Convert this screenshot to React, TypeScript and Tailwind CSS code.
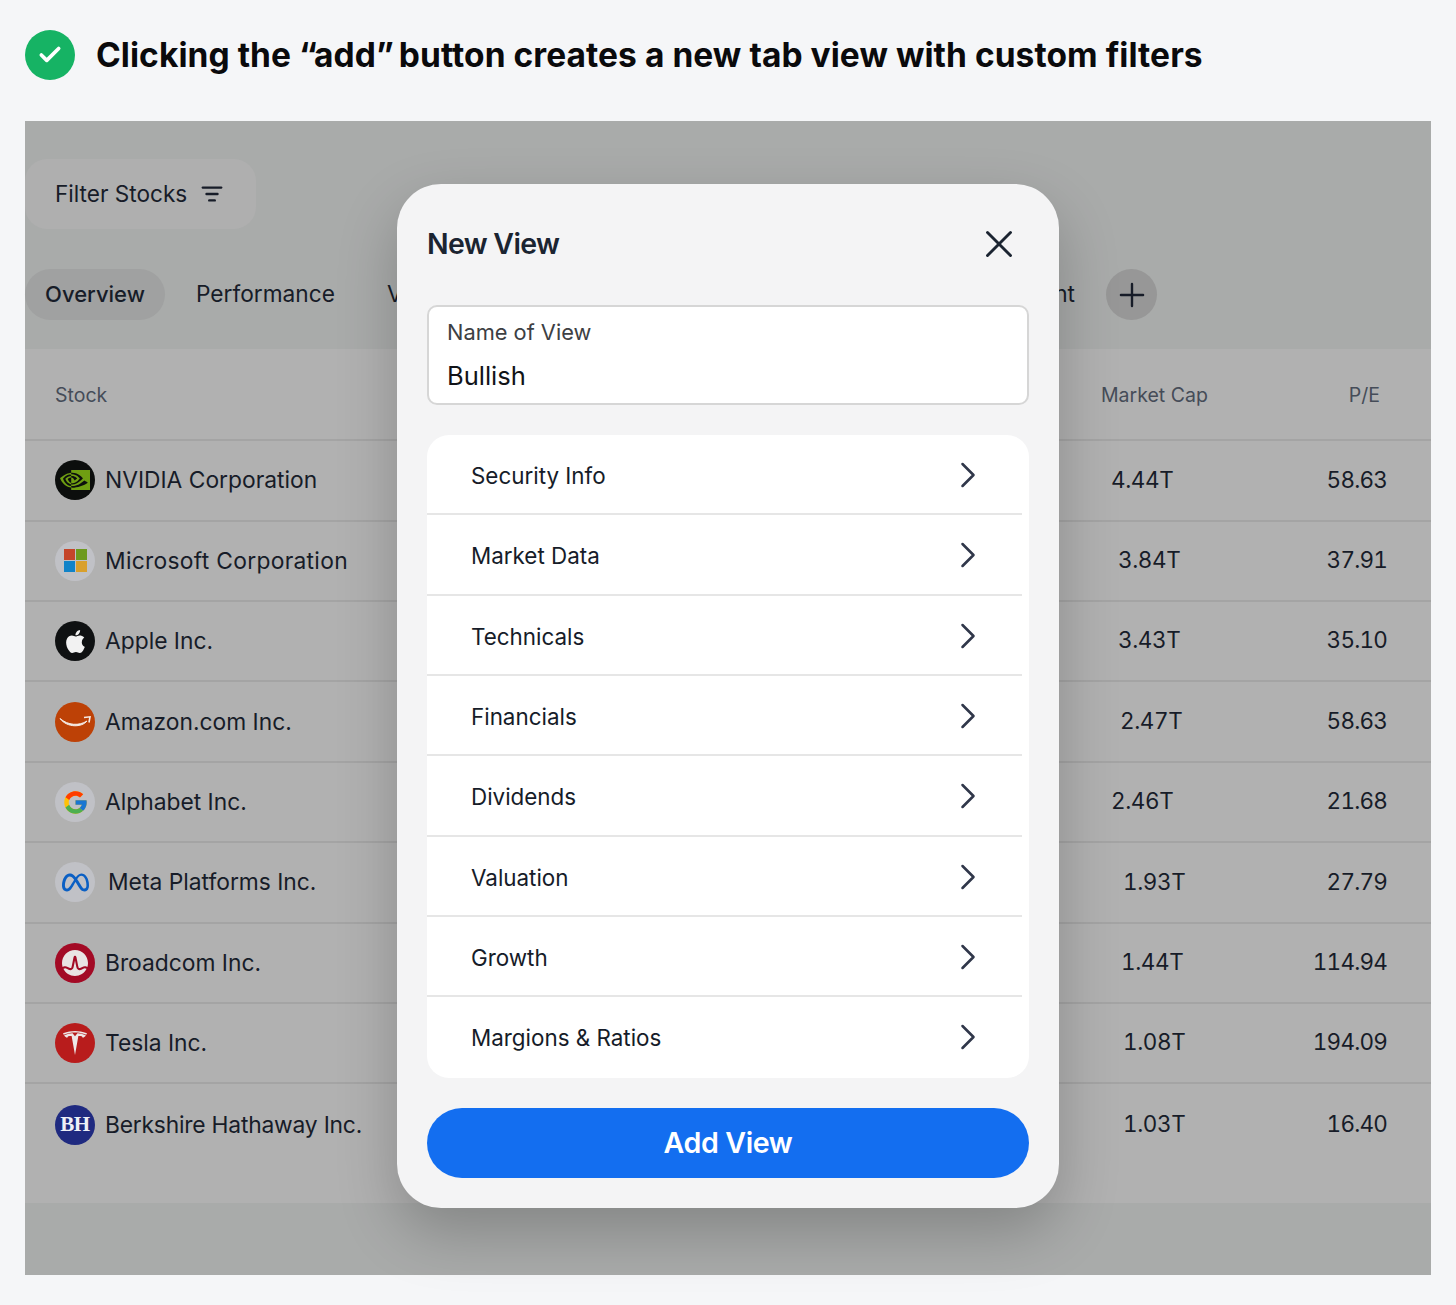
import React from 'react';
import { Check, ChevronRight, ListFilter, Plus, X } from 'lucide-react';
import { SiApple, SiBroadcom, SiMeta, SiNvidia, SiTesla } from 'react-icons/si';
import { FcGoogle } from 'react-icons/fc';

const MicrosoftLogo = () => (
  <div className="grid grid-cols-2 gap-[1px]">
    <div className="w-[11px] h-[11px] bg-[#c4452a]" />
    <div className="w-[11px] h-[11px] bg-[#6d9a1d]" />
    <div className="w-[11px] h-[11px] bg-[#1183c8]" />
    <div className="w-[11px] h-[11px] bg-[#d9a02c]" />
  </div>
);

const AmazonSmile = () => (
  <svg width="34" height="14" viewBox="0 0 34 14" fill="none">
    <path d="M2 3.5C10 10.5 21 11 29 6C24 12.5 9 13 2 3.5Z" fill="#f5ece6" stroke="#f5ece6" strokeWidth="1" />
    <path d="M26 2.5L32 1.8L31 7.5" stroke="#f5ece6" strokeWidth="1.6" fill="none" />
  </svg>
);

const stocks = [
  { name: 'NVIDIA Corporation', cap: '4.44T', capPad: 'pl-[10px]', pe: '58.63', logoBg: 'bg-[#0c0e0d]', logo: <SiNvidia size={30} color="#6f9e12" />, nameClass: 'ml-[10px]' },
  { name: 'Microsoft Corporation', cap: '3.84T', capPad: 'pl-[17px]', pe: '37.91', logoBg: 'bg-[#c0c1c6]', logo: <MicrosoftLogo />, nameClass: 'ml-[10px] tracking-[0.3px]' },
  { name: 'Apple Inc.', cap: '3.43T', capPad: 'pl-[17px]', pe: '35.10', logoBg: 'bg-[#0f1112]', logo: <SiApple size={23} color="#f2f2f2" />, nameClass: 'ml-[10px]' },
  { name: 'Amazon.com Inc.', cap: '2.47T', capPad: 'pl-[19px]', pe: '58.63', logoBg: 'bg-[#bd4106]', logo: <AmazonSmile />, nameClass: 'ml-[10px]' },
  { name: 'Alphabet Inc.', cap: '2.46T', capPad: 'pl-[10px]', pe: '21.68', logoBg: 'bg-[#c0c1c6]', logo: <FcGoogle size={27} />, nameClass: 'ml-[10px]' },
  { name: 'Meta Platforms Inc.', cap: '1.93T', capPad: 'pl-[22px]', pe: '27.79', logoBg: 'bg-[#c0c1c6]', logo: <SiMeta size={27} color="#0a5fc4" />, nameClass: 'ml-[13px]' },
  { name: 'Broadcom Inc.', cap: '1.44T', capPad: 'pl-[20px]', pe: '114.94', logoBg: 'bg-[#a30a25]', logo: <SiBroadcom size={26} color="#e9e3e3" />, nameClass: 'ml-[10px]' },
  { name: 'Tesla Inc.', cap: '1.08T', capPad: 'pl-[22px]', pe: '194.09', logoBg: 'bg-[#b81c1c]', logo: <SiTesla size={24} color="#eee7e7" />, nameClass: 'ml-[10px]' },
  { name: 'Berkshire Hathaway Inc.', cap: '1.03T', capPad: 'pl-[22px]', pe: '16.40', logoBg: 'bg-[#1f2a80]', logo: <span className="font-['Liberation_Serif',serif] font-bold text-[21px] text-[#eef0f7] tracking-[-0.5px]">BH</span>, nameClass: 'ml-[10px] tracking-[-0.2px]' },
];

const sections = ['Security Info', 'Market Data', 'Technicals', 'Financials', 'Dividends', 'Valuation', 'Growth', 'Margions & Ratios'];

export default function App() {
  return (
    <div className="min-h-[1305px] bg-[#f5f6f8] pt-[30px] px-[25px] font-['Inter',sans-serif]">
      <div className="flex items-center gap-[21px] h-[50px]">
        <div className="w-[50px] h-[50px] rounded-full bg-[#16b364] flex items-center justify-center">
          <Check size={26} color="#fff" strokeWidth={3.4} />
        </div>
        <h1 className="text-[33.5px] font-bold text-[#0a0a0c] tracking-[0.06px]">
          Clicking the <span className="tracking-[-3px]">“</span>add<span className="tracking-[-3px]">”</span> button creates a new tab view with custom filters
        </h1>
      </div>

      <div className="relative mt-[41px] h-[1154px] bg-[#a9abaa] text-[#171c28]">
        <div className="h-[228px] pt-[38px]">
          <div className="w-[231px] h-[70px] rounded-[22px] bg-[#afafaf] flex items-center pl-[30px] gap-[14px] text-[22.6px]">
            Filter Stocks
            <ListFilter size={22} strokeWidth={2.6} />
          </div>
          <div className="flex items-center mt-[40px] text-[22.7px] h-[51px]">
            <div className="w-[140px] h-[51px] rounded-full bg-[#a0a1a1] flex items-center justify-center font-medium text-[22px]">Overview</div>
            <div className="ml-[31px]">Performance</div>
            <div className="ml-[52px]">Valuation</div>
            <div className="flex-1 text-right">Sentiment</div>
            <div className="ml-[31px] mr-[274px] w-[51px] h-[51px] rounded-full bg-[#979797] flex items-center justify-center">
              <Plus size={38} strokeWidth={1.5} />
            </div>
          </div>
        </div>

        <div className="h-[854px] bg-[#b1b1b1]">
          <div className="h-[92.3px] pt-[3px] flex items-center border-b-2 border-[#a4a4a4] text-[19.5px] text-[#454c58]">
            <div className="pl-[30px] w-[1076px]">Stock</div>
            <div className="w-[130px]">Market Cap</div>
            <div className="w-[149px] text-right">P/E</div>
          </div>
          {stocks.map((s, i) => (
            <div key={s.name} className={`h-[80.4px] flex items-center text-[22.8px] ${i < stocks.length - 1 ? 'border-b-2 border-[#a4a4a4]' : ''}`}>
              <div className="pl-[30px] w-[1076px] flex items-center">
                <div className={`w-[40px] h-[40px] rounded-full flex items-center justify-center ${s.logoBg}`}>{s.logo}</div>
                <div className={s.nameClass}>{s.name}</div>
              </div>
              <div className={`w-[130px] pb-[2px] tabular-nums text-[22.5px] tracking-[-0.4px] ${s.capPad}`}>{s.cap}</div>
              <div className="w-[156px] pb-[2px] text-right tabular-nums text-[22.5px] tracking-[-0.8px]">{s.pe}</div>
            </div>
          ))}
        </div>

        {/* modal */}
        <div className="absolute left-[372px] top-[63px] w-[662px] h-[1024px] rounded-[44px] bg-[#f4f4f5] px-[30px] shadow-[0_24px_60px_rgba(0,0,0,0.22)]">
          <div className="h-[121px] flex items-center justify-between pb-[1px]">
            <div className="text-[28.5px] font-semibold text-[#1b2431] tracking-[-0.7px]">New View</div>
            <X size={46} strokeWidth={1.5} className="mr-[7px] text-[#1b2431]" />
          </div>
          <div className="h-[100px] rounded-[10px] border-2 border-[#d6d6d6] bg-white pl-[18px] pt-[9px]">
            <div className="text-[21.8px] text-[#3d4043]">Name of View</div>
            <div className="text-[25.5px] text-[#111318] mt-[8px]">Bullish</div>
          </div>
          <div className="mt-[30px] h-[643px] rounded-[22px] bg-white">
            {sections.map((label, i) => (
              <div key={label} className={`w-[595px] h-[80.33px] pl-[44px] pr-[32px] pt-[3px] flex items-center justify-between text-[22.4px] text-[#161c29] border-b-2 ${i < sections.length - 1 ? 'border-[#e6e6e6]' : 'border-transparent'}`}>
                {label}
                <ChevronRight size={44} strokeWidth={1.4} className="text-[#30374a] -mt-[1px]" />
              </div>
            ))}
          </div>
          <div className="mt-[30px] h-[70px] rounded-full bg-[#136ef0] flex items-center justify-center text-[28.6px] font-semibold text-white tracking-[-0.4px]">Add View</div>
        </div>
      </div>
    </div>
  );
}
